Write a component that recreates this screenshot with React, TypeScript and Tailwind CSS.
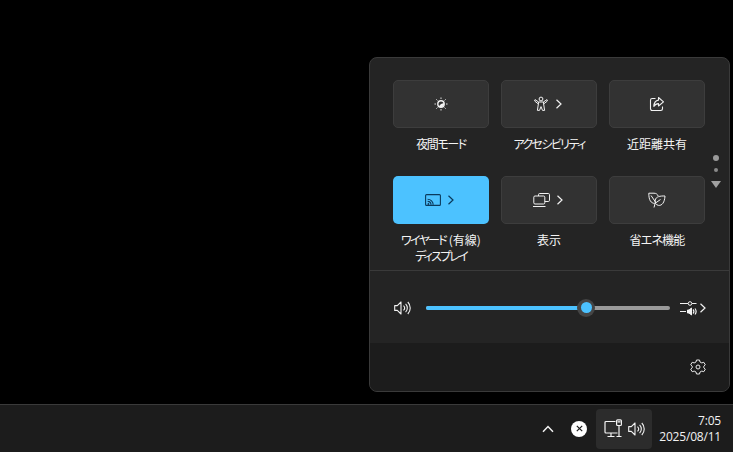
import React from "react";

const Chevron = ({ c = "#f0f0f0" }: { c?: string }) => (
  <svg width="8" height="10" viewBox="0 0 8 10" fill="none" stroke={c} strokeWidth="1.2"><path d="M1.5 0.8 L6 5 L1.5 9.2" /></svg>
);

const Night = () => (
  <svg width="16" height="16" viewBox="0 0 16 16" fill="none" stroke="#f2f2f2" strokeWidth="1">
    <circle cx="8" cy="8" r="3.2" strokeWidth="1.4" />
    <path d="M8 8 L5.8 10.3 A3.2 3.2 0 0 0 11 7 Z" fill="#f2f2f2" stroke="none" />
    <path d="M8 1.5v1.4M8 13.1v1.4M1.5 8h1.4M13.1 8h1.4M3.4 3.4l1 1M11.6 11.6l1 1M3.4 12.6l1-1M11.6 4.4l1-1" />
  </svg>
);
const Access = () => (
  <svg width="16" height="16" viewBox="0 0 16 16" fill="none" stroke="#f2f2f2" strokeWidth="1">
    <circle cx="8" cy="3" r="1.9" />
    <path d="M2 3.6 L5.6 6 H10.4 L14 3.6 M5.6 6 L5.2 9 L4.4 14.4 H6.5 L8 10.6 L9.5 14.4 H11.6 L10.8 9 L10.4 6 M2 3.6 L1.6 5 L5.4 8 M14 3.6 L14.4 5 L10.6 8" />
  </svg>
);
const Share = () => (
  <svg width="16" height="16" viewBox="0 0 16 16" fill="none" stroke="#f2f2f2" strokeWidth="1.1">
    <path d="M6.5 2.5 H3.2 A1.7 1.7 0 0 0 1.5 4.2 V12.8 A1.7 1.7 0 0 0 3.2 14.5 H11.8 A1.7 1.7 0 0 0 13.5 12.8 V10.5" />
    <path d="M9.5 1.5 L14.5 5.8 L9.5 10 V7.6 C7.5 7.6 6 8.4 4.8 10.4 C5 7 7 4.4 9.5 4.1 Z" strokeLinejoin="round" />
  </svg>
);
const Cast = () => (
  <svg width="16" height="16" viewBox="0 0 16 16" fill="none" stroke="#0b3a5c" strokeWidth="1.1">
    <rect x="0.6" y="2.6" width="14.8" height="10.8" rx="1" />
    <path d="M2.6 7.2 A5.6 5.6 0 0 1 8.2 12.8 M2.6 9.4 A3.4 3.4 0 0 1 6 12.8" />
    <circle cx="3.4" cy="12" r="0.9" fill="#0b3a5c" stroke="none" />
  </svg>
);
const Project = () => (
  <svg width="17" height="16" viewBox="0 0 17 16" fill="none" stroke="#f2f2f2" strokeWidth="1">
    <rect x="5.5" y="1.5" width="11" height="8" rx="1.2" />
    <rect x="0.8" y="4" width="11" height="8" rx="1.2" fill="#323232" />
    <path d="M0 14.5 H12.5" />
  </svg>
);
const Leaf = () => (
  <svg width="18" height="16" viewBox="0 0 18 16" fill="none" stroke="#f2f2f2" strokeWidth="1">
    <path d="M6.6 11.5 C3 11 0.8 8.5 0.8 1.2 H6 C8 1.2 9.5 2.2 10.2 4" strokeLinejoin="round" />
    <path d="M17 4 C12 3.8 8 4.6 7.2 8 C6.6 10.8 8 13 10.5 13.4 C14 13.8 16.6 10.5 17 4 Z" strokeLinejoin="round" />
    <path d="M3 3.5 L7.5 10 L6 15.5 M7.5 11 L12.5 7.5" />
  </svg>
);
const Speaker = () => (
  <svg width="17" height="14" viewBox="0 0 17 14" fill="none" stroke="#f2f2f2" strokeWidth="1.1">
    <path d="M0.7 4.6 H3.3 L7 1 V13 L3.3 9.4 H0.7 Z" strokeLinejoin="round" />
    <path d="M9.5 4.6 A3.4 3.4 0 0 1 9.5 9.4 M11.6 2.8 A6 6 0 0 1 11.6 11.2 M13.8 1 A8.6 8.6 0 0 1 13.8 13" />
  </svg>
);
const Mixer = () => (
  <svg width="17" height="16" viewBox="0 0 17 16" fill="none" stroke="#f2f2f2" strokeWidth="1">
    <path d="M0 3.5 H8 M12 3.5 H16.5 M0 11.5 H6" />
    <circle cx="10" cy="3.5" r="1.8" />
    <path d="M7.5 10 H9 L11.5 8 V15 L9 13 H7.5 Z" fill="#f2f2f2" />
    <path d="M13 9.5 A3 3 0 0 1 13 13.5 M15 8.5 A5 5 0 0 1 15 14.5" strokeWidth="1.2" />
  </svg>
);
const Gear = () => (
  <svg width="16" height="16" viewBox="0 0 16 16" fill="none" stroke="#e8e8e8" strokeWidth="1">
    <circle cx="8" cy="8" r="2" />
    <path d="M6.5 1 H9.5 L10 3 L11.8 3.9 L13.8 3.3 L15.3 5.8 L13.8 7.2 V8.8 L15.3 10.2 L13.8 12.7 L11.8 12.1 L10 13 L9.5 15 H6.5 L6 13 L4.2 12.1 L2.2 12.7 L0.7 10.2 L2.2 8.8 V7.2 L0.7 5.8 L2.2 3.3 L4.2 3.9 L6 3 Z" strokeLinejoin="round" />
  </svg>
);
const Network = () => (
  <svg width="19" height="20" viewBox="0 0 19 20" fill="none" stroke="#f4f4f4" strokeWidth="1.2">
    <path d="M11.5 2.5 H2 A1 1 0 0 0 1 3.5 V13 A1 1 0 0 0 2 14 H13.5 M7 14 V17.5 M3.5 17.5 H10.5" />
    <rect x="12.6" y="0.8" width="4.8" height="5.7" rx="1" />
    <path d="M15 6.5 V17.5 M13.5 2.8 h3 M12.5 17.5 H17.5" />
  </svg>
);

function Tile({ label, icon, chevron, active }: { label: React.ReactNode; icon: React.ReactNode; chevron?: boolean; active?: boolean }) {
  return (
    <div className="w-[96px] flex flex-col items-center">
      <div className={active
        ? "w-[96px] h-[48px] pr-[2px] rounded-[5px] bg-[#4cc2ff] flex items-center justify-center gap-[6px]"
        : chevron
          ? "w-[96px] h-[48px] pr-[2px] rounded-[5px] bg-[#323232] border border-[#3d3d3d] flex items-center justify-center gap-[6px]"
          : "w-[96px] h-[48px] rounded-[5px] bg-[#323232] border border-[#3d3d3d] flex items-center justify-center gap-[6px]"}>
        <span className="flex">{icon}</span>
        {chevron && <span className="flex"><Chevron c={active ? "#0b3a5c" : "#f0f0f0"} /></span>}
      </div>
      <div className="mt-[8px] w-[110px] text-center text-[12px] leading-[16px] text-[#f4f4f4] whitespace-nowrap [font-feature-settings:'palt']">{label}</div>
    </div>
  );
}

export default function App() {
  return (
    <div
      className="w-[733px] h-[452px] bg-black flex flex-col overflow-hidden"
      style={{ fontFamily: '"Noto Sans CJK JP", "Noto Sans", sans-serif' }}
    >
      <div className="flex-1 flex justify-end items-start pt-[57px] pr-[3px]">
        <div className="relative w-[361px] h-[335px] rounded-[8px] border border-[#3a3a3a] bg-[#242424] overflow-hidden flex flex-col">
          <div className="h-[212px] pl-[23px] pt-[22px] grid grid-cols-[96px_96px_96px] gap-x-[12px] auto-rows-[96px]">
            <Tile label={<span className="tracking-[-1.4px]">夜間モード</span>} icon={<Night />} />
            <Tile label={<span className="tracking-[-1.6px]">アクセシビリティ</span>} icon={<Access />} chevron />
            <Tile label="近距離共有" icon={<Share />} />
            <Tile
              label={<><span className="tracking-[-1.7px]">ワイヤード</span> <span>(有線)</span><br /><span className="tracking-[-1.8px]">ディスプレイ</span></>}
              icon={<Cast />}
              chevron
              active
            />
            <Tile label="表示" icon={<Project />} chevron />
            <Tile label={<span className="tracking-[-0.8px]">省エネ機能</span>} icon={<Leaf />} />
          </div>
          <div className="absolute right-[8px] top-[97px] flex flex-col items-center">
            <div className="w-[6px] h-[6px] rounded-full bg-[#9a9a9a]" />
            <div className="mt-[7px] w-[4px] h-[4px] rounded-full bg-[#8a8a8a]" />
            <div className="mt-[9px] w-0 h-0 border-l-[5px] border-r-[5px] border-t-[7px] border-l-transparent border-r-transparent border-t-[#a0a0a0]" />
          </div>
          <div className="h-[73px] pt-[1px] border-t border-[#3a3a3a] flex items-center pl-[24px]">
            <Speaker />
            <div className="ml-[15px] w-[244px] h-[4px] rounded-full bg-[#9a9a9a] relative">
              <div className="h-[4px] w-[159px] rounded-full bg-[#4cc2ff]" />
              <div className="absolute left-[151px] top-[-7px] w-[18px] h-[18px] rounded-full bg-[#454545] flex items-center justify-center">
                <div className="w-[11px] h-[11px] rounded-full bg-[#4cc2ff]" />
              </div>
            </div>
            <div className="ml-[10px] flex items-center gap-[2px]">
              <Mixer />
              <Chevron />
            </div>
          </div>
          <div className="flex-1 bg-[#1c1c1c] flex items-center justify-end pr-[23px]">
            <Gear />
          </div>
        </div>
      </div>
      <div className="h-[48px] bg-[#1c1c1c] border-t border-[#3a3a3a] flex items-center justify-end">
        <svg width="12" height="8" viewBox="0 0 12 8" fill="none" stroke="#f2f2f2" strokeWidth="1.5" className="mr-[17px]"><path d="M1 6.8 L6 1.5 L11 6.8" /></svg>
        <div className="w-[16px] h-[16px] rounded-full bg-white flex items-center justify-center mr-[9px]">
          <svg width="7" height="7" viewBox="0 0 7 7" stroke="#1c1c1c" strokeWidth="1.2"><path d="M0.8 0.8 L6.2 6.2 M6.2 0.8 L0.8 6.2" /></svg>
        </div>
        <div className="w-[56px] h-[40px] rounded-[4px] bg-[#2c2c2c] flex items-center pl-[8px] gap-[5px]">
          <Network />
          <Speaker />
        </div>
        <div className="w-[81px] pr-[12px] text-right text-[12px] leading-[16px] tracking-[-0.2px] text-[#f2f2f2]" style={{ fontFamily: '"Open Sans", sans-serif' }}>
          <div>7:05</div>
          <div>2025/08/11</div>
        </div>
      </div>
    </div>
  );
}
